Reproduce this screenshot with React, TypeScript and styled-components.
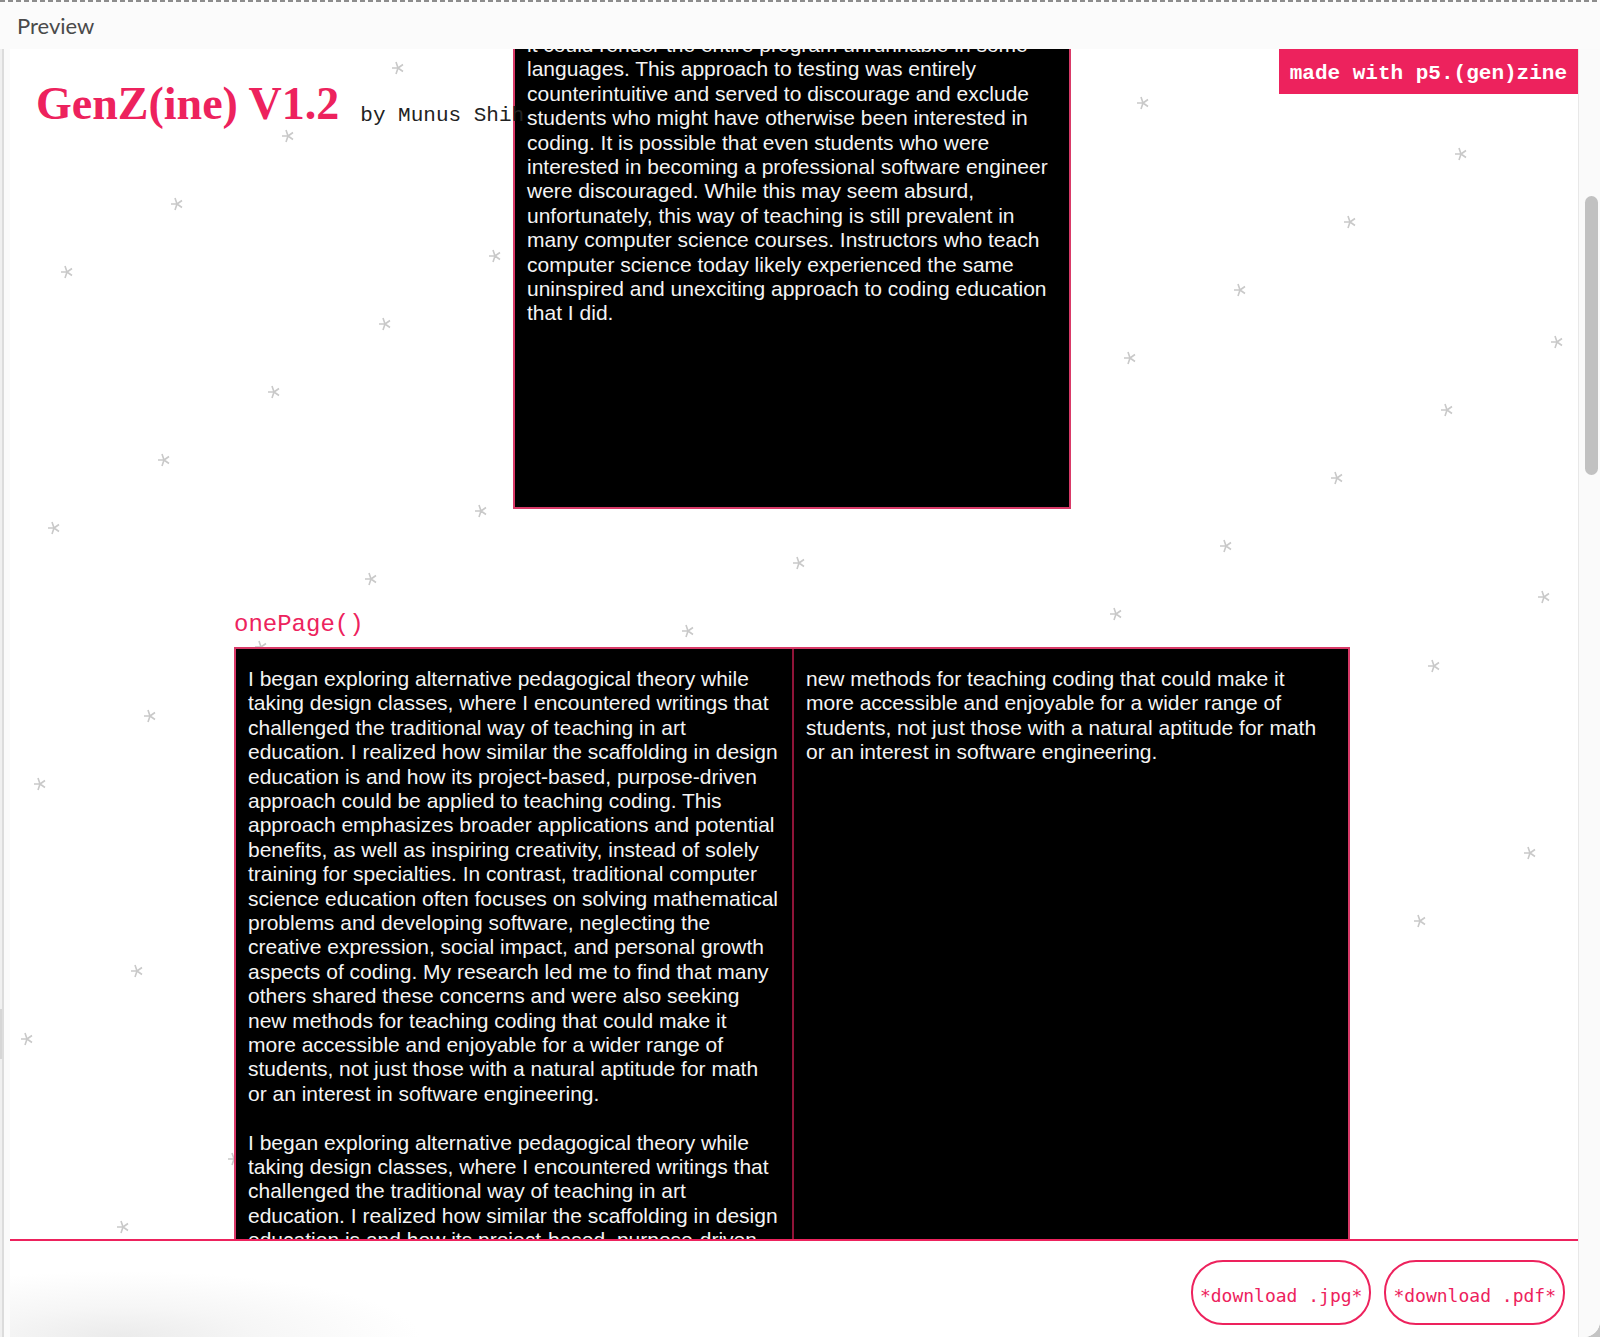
import React from "react";
import styled, { createGlobalStyle } from "styled-components";

const PINK = "#ed225d";
const SHEET_EDGE = "#d93a68";
const SANS = '"Liberation Sans", Arial, Helvetica, sans-serif';
const MONO = '"Liberation Mono", "Courier New", monospace';

const GlobalStyle = createGlobalStyle`
  *, *::before, *::after { box-sizing: border-box; }
  body { margin: 0; background: #c4c4c4; }
`;

const Shell = styled.div`
  display: flex;
  flex-direction: column;
  height: 100vh;
  overflow: hidden;
  background: #fbfbfb;
  border-bottom-right-radius: 16px;
`;

const DashedRule = styled.div`
  flex: none;
  height: 2px;
  background: repeating-linear-gradient(90deg, #8c8c8c 0 5px, #fbfbfb 5px 8px);
`;

const Header = styled.header`
  flex: none;
  display: flex;
  align-items: center;
  height: 47px;
  padding-left: 17px;
`;

const HeaderTitle = styled.h2`
  margin: 0;
  font: 400 22px/24px Lato, sans-serif;
  color: #4a4a4a;
`;

const Body = styled.div`
  flex: 1;
  min-height: 0;
  display: flex;
`;

const Gutter = styled.div`
  width: 10px;
  display: flex;
  flex-direction: column;
`;

const GutterTrack = styled.div<{ $grow: number; $thumb?: boolean }>`
  flex: ${(p) => p.$grow} 1 0;
  width: 4px;
  background: ${(p) => (p.$thumb ? "#d5d5d5" : "#f0f0f0")};
  border-right: 2px solid #dcdcdc;
`;

const Frame = styled.div`
  flex: 1;
  min-width: 0;
  display: flex;
  flex-direction: column;
  background: #fff;
`;

const Stage = styled.main`
  position: relative;
  flex: 1;
  min-height: 0;
  overflow: hidden;
  display: flex;
  flex-direction: column;
  align-items: center;
  padding-right: 4px;
`;

const StarField = styled.svg`
  position: absolute;
  inset: 0;
  width: 100%;
  height: 100%;
  fill: none;
  stroke: #c9c9c9;
  stroke-width: 1.6;
`;

const TitleBar = styled.div`
  position: absolute;
  z-index: 1;
  top: 27px;
  left: 26px;
  display: flex;
  align-items: flex-end;
  gap: 21px;
`;

const Title = styled.h1`
  margin: 0;
  font: 700 46px/56px "Liberation Serif", "Times New Roman", serif;
  color: ${PINK};
`;

const Byline = styled.span`
  font: 400 21px/32px ${MONO};
  color: #222;
`;

const Badge = styled.a`
  position: absolute;
  top: 0;
  right: 0;
  padding: 13px 11px 8px;
  font: 700 21px/24px ${MONO};
  color: #fff;
  background: ${PINK};
  text-decoration: none;
`;

const Sheet = styled.article<{ $continued?: boolean }>`
  position: relative;
  width: ${(p) => (p.$continued ? "558px" : "auto")};
  height: ${(p) => (p.$continued ? "460px" : "auto")};
  flex: none;
  overflow: hidden;
  background: #000;
  border: 2px solid ${SHEET_EDGE};
  border-top-width: ${(p) => (p.$continued ? 0 : "2px")};
`;

const SpreadBlock = styled.section`
  position: relative;
  flex: none;
  margin-top: 102px;
`;

const SpreadLabel = styled.h3`
  margin: 0;
  font: 400 24px/28px ${MONO};
  color: ${PINK};
  padding-bottom: 8px;
`;

const Spread = styled.div`
  display: grid;
  grid-template-columns: 556px 556px;
`;

const Page = styled.div`
  padding: 18px 12px;
  & + & {
    border-left: 2px solid #8f1438;
  }
`;

const Copy = styled.div<{ $scrolled?: boolean }>`
  display: grid;
  grid-template-rows: repeat(30, 1fr);
  height: 732px;
  margin: ${(p) => (p.$scrolled ? "-16px 12px 0" : "0")};
  font: 400 21px/24px ${SANS};
  color: #f4f4f4;
  white-space: nowrap;
`;

const Line = styled.span`
  height: 24px;
`;

const Actions = styled.footer`
  position: relative;
  flex: none;
  display: flex;
  justify-content: flex-end;
  gap: 13px;
  padding: 19px 13px 12px;
  border-top: 2px solid ${PINK};
  background: radial-gradient(ellipse 300px 66px at 110px 100%, #ebebeb 0%, #f6f6f6 45%, #fff 100%);
`;

const DownloadButton = styled.button`
  height: 65px;
  padding: 6px 7px 0;
  border: 2px solid ${PINK};
  border-radius: 32px;
  background: #fff;
  color: ${PINK};
  font: 400 18px/24px "DejaVu Sans Mono", monospace;
  cursor: pointer;
`;

const ScrollTrack = styled.div`
  width: 22px;
  padding: 147px 2px 0 6px;
  border-left: 1px solid #e8e8e8;
  background: #fafafa;
`;

const ScrollThumb = styled.div`
  width: 13px;
  height: 279px;
  border-radius: 7px;
  background: #c1c1c1;
`;

const continuedLines = [
  "it could render the entire program unrunnable in some",
  "languages. This approach to testing was entirely",
  "counterintuitive and served to discourage and exclude",
  "students who might have otherwise been interested in",
  "coding. It is possible that even students who were",
  "interested in becoming a professional software engineer",
  "were discouraged. While this may seem absurd,",
  "unfortunately, this way of teaching is still prevalent in",
  "many computer science courses. Instructors who teach",
  "computer science today likely experienced the same",
  "uninspired and unexciting approach to coding education",
  "that I did.",
];

const closingLines = [
  "new methods for teaching coding that could make it",
  "more accessible and enjoyable for a wider range of",
  "students, not just those with a natural aptitude for math",
  "or an interest in software engineering.",
];

const openingLines = [
  "I began exploring alternative pedagogical theory while",
  "taking design classes, where I encountered writings that",
  "challenged the traditional way of teaching in art",
  "education. I realized how similar the scaffolding in design",
  "education is and how its project-based, purpose-driven",
];

const pageLines = [
  ...openingLines,
  "approach could be applied to teaching coding. This",
  "approach emphasizes broader applications and potential",
  "benefits, as well as inspiring creativity, instead of solely",
  "training for specialties. In contrast, traditional computer",
  "science education often focuses on solving mathematical",
  "problems and developing software, neglecting the",
  "creative expression, social impact, and personal growth",
  "aspects of coding. My research led me to find that many",
  "others shared these concerns and were also seeking",
  ...closingLines,
  "",
  ...openingLines,
];

const Lines = ({ lines, scrolled }: { lines: string[]; scrolled?: boolean }) => (
  <Copy $scrolled={scrolled}>
    {lines.map((line, i) => (
      <Line key={i}>{line}</Line>
    ))}
  </Copy>
);

// The stars sit on a slanted lattice spanned by two steps.
const stars: { x: number; y: number }[] = [];
for (let a = -6; a <= 22; a++) {
  for (let b = -4; b <= 6; b++) {
    const x = Math.round(388 - 110.3 * a + 317.4 * b);
    const y = Math.round(19 + 68.1 * a + 51.4 * b);
    if (x > 0 && x < 1600 && y > 0 && y < 1200) stars.push({ x, y });
  }
}

const Stars = () => (
  <StarField aria-hidden="true">
    {stars.map(({ x, y }) => (
      <path
        key={`${x}-${y}`}
        transform={`translate(${x} ${y})`}
        d="M0 0H-6M0 0L-2 -6M0 0L5 -3.5M0 0L5 3.5M0 0L-2 6"
      />
    ))}
  </StarField>
);

export default function App() {
  return (
    <Shell>
      <GlobalStyle />
      <DashedRule />
      <Header>
        <HeaderTitle>Preview</HeaderTitle>
      </Header>
      <Body>
        <Gutter>
          <GutterTrack $grow={960} />
          <GutterTrack $grow={50} $thumb />
          <GutterTrack $grow={278} />
        </Gutter>
        <Frame>
          <Stage>
            <Stars />
            <TitleBar>
              <Title>GenZ(ine) V1.2</Title>
              <Byline>by Munus Shih</Byline>
            </TitleBar>
            <Sheet $continued>
              <Lines lines={continuedLines} scrolled />
            </Sheet>
            <SpreadBlock>
              <SpreadLabel>onePage()</SpreadLabel>
              <Sheet>
                <Spread>
                  <Page>
                    <Lines lines={pageLines} />
                  </Page>
                  <Page>
                    <Lines lines={closingLines} />
                  </Page>
                </Spread>
              </Sheet>
            </SpreadBlock>
            <Badge href="#genzine">made with p5.(gen)zine</Badge>
          </Stage>
          <Actions>
            <DownloadButton type="button">*download .jpg*</DownloadButton>
            <DownloadButton type="button">*download .pdf*</DownloadButton>
          </Actions>
        </Frame>
        <ScrollTrack>
          <ScrollThumb />
        </ScrollTrack>
      </Body>
    </Shell>
  );
}
